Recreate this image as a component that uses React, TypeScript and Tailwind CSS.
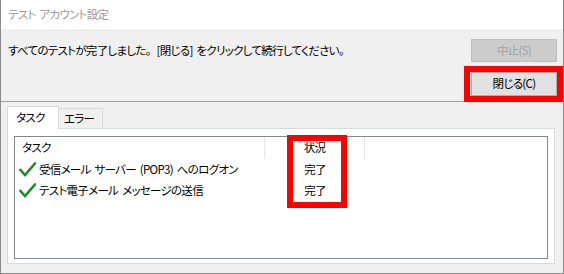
import React from "react";

const font = "font-['Noto_Sans_CJK_JP','Noto_Sans',sans-serif] [font-feature-settings:'palt'] tracking-[-0.7px] [word-spacing:2px]";

function Check() {
  return (
    <svg width="17" height="15" viewBox="0 0 17 15" className="shrink-0">
      <polyline points="1.5,8 6,13 16,1.5" fill="none" stroke="#1f8a2a" strokeWidth="2.6" strokeLinecap="square" strokeLinejoin="miter" />
    </svg>
  );
}

export default function App() {
  return (
    <div className={`relative w-[564px] h-[274px] flex flex-col border-x border-b border-[#8a8a8a] bg-[#f0f0f0] text-[11.5px] leading-none text-black ${font}`}>
      {/* title bar */}
      <div className="h-[29px] bg-white flex items-center pl-[7px] text-[#9a9a9a]">
        テスト アカウント設定
      </div>
      {/* message + buttons */}
      <div className="flex flex-col pt-[10px] pr-[6px] pl-[7px]">
        <div className="flex items-center justify-between h-[23px]">
          <span className="pt-[1px]">
            すべてのテストが完了しました<span className="[font-feature-settings:normal]">。</span>[閉じる] をクリックして続行してください。
          </span>
          <div className="w-[86px] h-[23px] border border-[#bfbfbf] bg-[#cccccc] text-[#a3a3a3] flex items-center justify-center">中止(S)</div>
        </div>
        <div className="flex justify-end mt-[10px]">
          <div className="w-[86px] h-[24px] border border-[#adadad] bg-[#e1e1e1] flex items-center justify-center">閉じる(C)</div>
        </div>
      </div>
      <div className="mt-[5px] h-px bg-[#a0a0a0]" />
      {/* tabs */}
      <div className="flex items-end pl-[6px] mt-[3px] h-[23px]">
        <div className="relative z-10 w-[52px] h-[23px] bg-white border-x border-t border-[#d9d9d9] flex items-center pl-[8px] -mb-px pb-[1px]">タスク</div>
        <div className="w-[44px] h-[20px] bg-[#f0f0f0] border-r border-t border-[#d9d9d9] flex items-center pl-[5px]">エラー</div>
      </div>
      {/* tab panel */}
      <div className="ml-[6px] w-[548px] h-[136px] bg-white border border-[#d9d9d9] pt-[7px] pl-[6px] pr-[6px] pb-[4px]">
        <div className="w-full h-full border border-[#828790] bg-white flex flex-col">
          <div className="flex h-[22px] items-center">
            <div className="w-[250px] h-full border-r border-[#e5e5e5] flex items-center pl-[7px]">タスク</div>
            <div className="w-[100px] h-full border-r border-[#e5e5e5] flex items-center justify-center">状況</div>
          </div>
          {["受信メール サーバー (POP3) へのログオン", "テスト電子メール メッセージの送信"].map((t) => (
            <div key={t} className="flex h-[21px] items-center">
              <div className="w-[250px] flex items-center pl-[4px] gap-[3px]">
                <Check />
                <span>{t}</span>
              </div>
              <div className="w-[100px] flex justify-center">完了</div>
            </div>
          ))}
        </div>
      </div>
      {/* annotations */}
      <div className="absolute left-[463px] top-[66px] w-[99px] h-[36px] border-[6px] border-[#ff0000]" />
      <div className="absolute left-[286px] top-[135px] w-[60px] h-[73px] border-[6px] border-[#ff0000]" />
    </div>
  );
}
